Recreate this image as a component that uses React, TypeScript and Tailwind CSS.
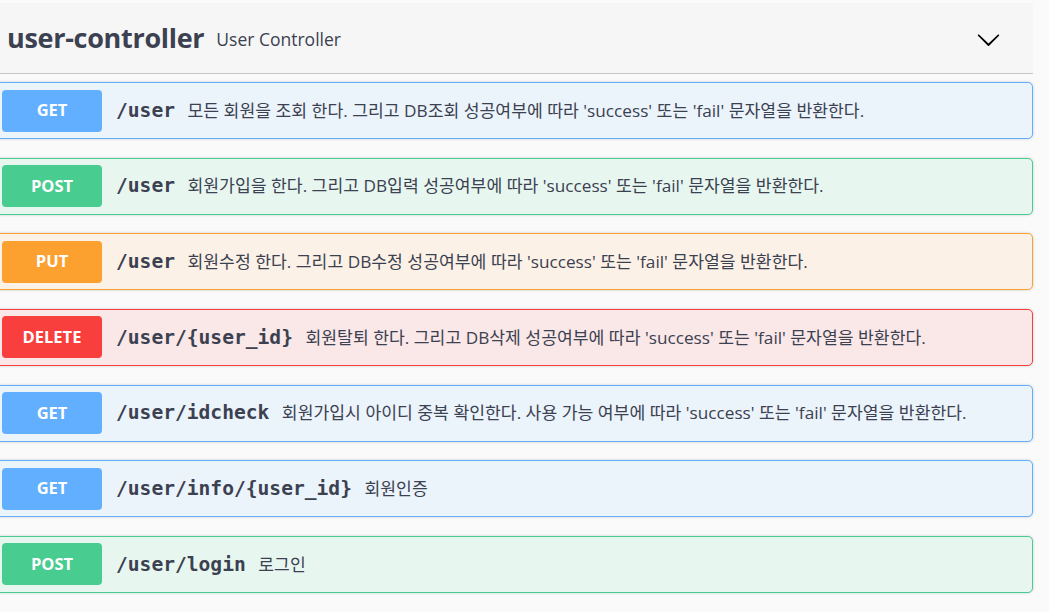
import React from "react";

type Op = { method: "GET" | "POST" | "PUT" | "DELETE"; path: string; desc: string };

const ops: Op[] = [
  { method: "GET", path: "/user", desc: "모든 회원을 조회 한다. 그리고 DB조회 성공여부에 따라 'success' 또는 'fail' 문자열을 반환한다." },
  { method: "POST", path: "/user", desc: "회원가입을 한다. 그리고 DB입력 성공여부에 따라 'success' 또는 'fail' 문자열을 반환한다." },
  { method: "PUT", path: "/user", desc: "회원수정 한다. 그리고 DB수정 성공여부에 따라 'success' 또는 'fail' 문자열을 반환한다." },
  { method: "DELETE", path: "/user/{user_id}", desc: "회원탈퇴 한다. 그리고 DB삭제 성공여부에 따라 'success' 또는 'fail' 문자열을 반환한다." },
  { method: "GET", path: "/user/idcheck", desc: "회원가입시 아이디 중복 확인한다. 사용 가능 여부에 따라 'success' 또는 'fail' 문자열을 반환한다." },
  { method: "GET", path: "/user/info/{user_id}", desc: "회원인증" },
  { method: "POST", path: "/user/login", desc: "로그인" },
];

const styles: Record<Op["method"], { block: string; badge: string }> = {
  GET: { block: "bg-[#ebf3fb] border-[#61affe]", badge: "bg-[#61affe]" },
  POST: { block: "bg-[#e8f6f0] border-[#49cc90]", badge: "bg-[#49cc90]" },
  PUT: { block: "bg-[#fbf1e6] border-[#fca130]", badge: "bg-[#fca130]" },
  DELETE: { block: "bg-[#fae7e7] border-[#f93e3e]", badge: "bg-[#f93e3e]" },
};

function Chevron() {
  return (
    <svg width="25" height="25" viewBox="0 0 20 20" fill="#000">
      <path d="M17.418 6.109c.272-.268.709-.268.979 0s.271.701 0 .969l-7.908 7.83c-.27.268-.707.268-.979 0l-7.908-7.83c-.27-.268-.27-.701 0-.969.271-.268.709-.268.979 0L10 13.25l7.418-7.141z" />
    </svg>
  );
}

export default function App() {
  return (
    <div className="h-[612px] w-[1049px] overflow-hidden bg-[#fafafa] pt-[3px] text-[#3b4151]">
      <div className="ml-[-5px] w-[1038px]">
        <div className="flex h-[71px] items-center border-b border-[#c4c6cb] bg-[#f6f6f6] pl-[12px] pr-[32px]">
          <span
            className="text-[27px] font-bold tracking-[-0.3px]"
            style={{ fontFamily: "'Open Sans', 'Noto Sans', sans-serif" }}
          >
            user-controller
          </span>
          <span
            className="ml-[12px] mt-[2px] text-[17.5px]"
            style={{ fontFamily: "'Open Sans', 'Noto Sans', sans-serif" }}
          >
            User Controller
          </span>
          <div className="ml-auto mt-[3px] flex items-center">
            <Chevron />
          </div>
        </div>
        <div className="mt-[8px] flex flex-col gap-[18.67px]">
          {ops.map((op, i) => (
            <div
              key={i}
              className={`flex h-[57px] items-center rounded-[5px] border px-[6px] shadow-[0_0_3px_rgba(0,0,0,0.19)] ${styles[op.method].block}`}
            >
              <div
                className={`flex h-[42px] w-[100px] shrink-0 items-center justify-center rounded-[4px] text-[16.5px] font-bold text-white ${styles[op.method].badge}`}
                style={{ fontFamily: "'Open Sans', 'Noto Sans', sans-serif" }}
              >
                {op.method}
              </div>
              <span
                className="pl-[14px] pr-[12.5px] text-[19.6px] font-bold text-[#3b4151]"
                style={{ fontFamily: "'DejaVu Sans Mono', 'Liberation Mono', monospace" }}
              >
                {op.path}
              </span>
              <span
                className="text-[17.2px]"
                style={{ fontFamily: "'Open Sans', 'Noto Sans CJK KR', sans-serif" }}
              >
                {op.desc}
              </span>
            </div>
          ))}
        </div>
      </div>
    </div>
  );
}
